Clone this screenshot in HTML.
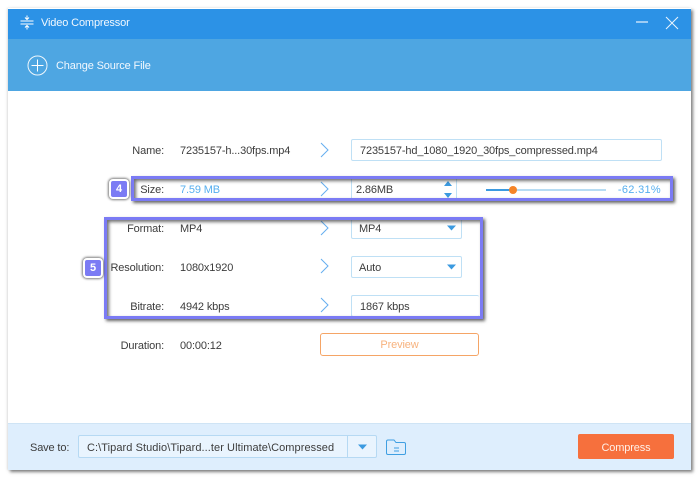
<!DOCTYPE html>
<html><head><meta charset="utf-8"><style>
html,body{margin:0;padding:0;width:700px;height:479px;overflow:hidden;background:#fff}
body{position:relative;font:11px/14px "Liberation Sans",sans-serif;color:#3c3c3c;letter-spacing:-.14px}
.a{position:absolute}
.t{position:absolute;white-space:nowrap;height:14px}
.l{position:absolute;white-space:nowrap;right:536px;height:14px}
.i{position:absolute;box-sizing:border-box;border:1px solid #bfe0f5;border-radius:2px;background:#fff}
.h{position:absolute;box-sizing:border-box;border:3px solid #7b7bf4;box-shadow:2px 2px 3px rgba(50,50,50,.75),inset 2px 2px 3px rgba(50,50,50,.7)}
.b{position:absolute;box-sizing:border-box;width:20px;height:20px;background:#7b7bf4;border:2px solid #fff;border-radius:4px;box-shadow:0 0 2px 1px rgba(70,70,70,.7);color:#fff;font:bold 11px/16px "Liberation Sans",sans-serif;text-align:center;letter-spacing:0}
svg{position:absolute;overflow:visible}
</style></head><body>
<div class="a" style="left:8px;top:8px;width:683px;height:462px;background:#fff;box-shadow:2px 2px 3px rgba(60,60,60,.65),-1px 0 2px rgba(150,150,150,.25)"></div>
<div class="a" style="left:8px;top:9px;width:683px;height:30px;background:#2c92e6"></div>
<div class="a" style="left:8px;top:39px;width:683px;height:52px;background:#4ea6e2"></div>

<svg style="left:0;top:0" width="700" height="100" fill="none" stroke="#fff">
<path d="M20.500 21h13M20.500 24h13" stroke-width="1"/>
<path d="M27 15.500v3.500M27 26v3.500" stroke-width="1"/>
<path d="M25 17.500l2 2 2-2M25 27.500l2-2 2 2" stroke-width="1"/>
<circle cx="37.500" cy="65.500" r="9.500" stroke-width="1" opacity=".9"/>
<path d="M37.500 59.500v12M31.500 65.500h12" stroke-width="1"/>
<path d="M636 22h12" stroke-width="1.200" opacity=".9"/>
<path d="M666 17l12 12M678 17l-12 12" stroke-width="1" opacity=".9"/>
</svg>
<div class="t" style="left:41px;top:16px;color:#f2f8fe">Video Compressor</div>
<div class="t" style="left:56px;top:59px;color:#f2f8fe">Change Source File</div>

<div class="l" style="top:144px">Name:</div>
<div class="t" style="left:180px;top:144px">7235157-h...30fps.mp4</div>
<div class="l" style="top:183px">Size:</div>
<div class="t" style="left:180px;top:183px;color:#55aeef">7.59 MB</div>
<div class="l" style="top:222px">Format:</div>
<div class="t" style="left:180px;top:222px">MP4</div>
<div class="l" style="top:261px">Resolution:</div>
<div class="t" style="left:180px;top:261px">1080x1920</div>
<div class="l" style="top:300px">Bitrate:</div>
<div class="t" style="left:180px;top:300px">4942 kbps</div>
<div class="l" style="top:339px">Duration:</div>
<div class="t" style="left:180px;top:339px">00:00:12</div>

<svg style="left:0;top:0" width="700" height="330" fill="none" stroke="#64aef0" stroke-width="1">
<path d="M321 143l7 7-7 7M321 182l7 7-7 7M321 221l7 7-7 7M321 259l7 7-7 7M321 298l7 7-7 7"/>
</svg>

<div class="i" style="left:351px;top:139px;width:311px;height:22px"></div>
<div class="t" style="left:360px;top:144px">7235157-hd_1080_1920_30fps_compressed.mp4</div>

<div class="i" style="left:351px;top:178px;width:106px;height:22px;border-radius:0"></div>
<div class="t" style="left:356px;top:183px">2.86MB</div>
<div class="a" style="left:486px;top:189px;width:120px;height:2px;background:#b7dcf3"></div>
<div class="a" style="left:486px;top:189px;width:27px;height:2px;background:#3b9ae0"></div>
<div class="a" style="left:509px;top:186px;width:8px;height:8px;border-radius:50%;background:#f58428"></div>
<div class="t" style="right:39px;top:183px;color:#55aeef;letter-spacing:.3px">-62.31%</div>

<div class="i" style="left:351px;top:218px;width:111px;height:21px"></div>
<div class="t" style="left:359px;top:222px">MP4</div>
<div class="i" style="left:351px;top:256px;width:111px;height:22px"></div>
<div class="t" style="left:359px;top:261px">Auto</div>
<div class="i" style="left:351px;top:295px;width:128px;height:22px;border-right:0"></div>
<div class="t" style="left:360px;top:300px">1867 kbps</div>
<svg style="left:0;top:0" width="700" height="280" fill="#3b9ae0">
<path d="M444 186l4-5 4 5zM444 193l4 5 4-5z"/>
<path d="M447 225.500h9l-4.500 5zM447 264.500h9l-4.500 5z"/>
</svg>

<div class="a" style="left:320px;top:333px;width:159px;height:23px;box-sizing:border-box;border:1.500px solid #f5a566;border-radius:3px;background:#fff;color:#f7b27d;text-align:center;line-height:23px">Preview</div>

<div class="h" style="left:131px;top:176px;width:542px;height:25px"></div>
<div class="h" style="left:104px;top:217px;width:379px;height:102px"></div>
<div class="b" style="left:109px;top:179px">4</div>
<div class="b" style="left:83px;top:258px">5</div>

<div class="a" style="left:8px;top:423px;width:683px;height:47px;background:#deeefd;border-top:1px solid #cfe4f5;box-sizing:border-box"></div>
<div class="t" style="left:30px;top:441px">Save to:</div>
<div class="a" style="left:78px;top:435px;width:299px;height:23px;box-sizing:border-box;border:1px solid #b6d9f3;border-radius:2px;background:#e9f4fe"></div>
<div class="a" style="left:347px;top:435px;width:1px;height:23px;background:#b6d9f3"></div>
<div class="t" style="left:87px;top:441px;letter-spacing:.07px">C:\Tipard Studio\Tipard...ter Ultimate\Compressed</div>
<svg style="left:0;top:0" width="700" height="479">
<path d="M358 444.500h9l-4.500 5z" fill="#3b9ae0"/>
<path d="M386.500 441.500q0-1.500 1.500-1.500h6l2 2.500h8q1.500 0 1.500 1.500v9q0 1.500-1.500 1.500h-16q-1.500 0-1.500-1.500zM394 448h5M394 451h5" fill="none" stroke="#3f9fe2" stroke-width="1"/>
</svg>
<div class="a" style="left:578px;top:434px;width:96px;height:25px;border-radius:2px;background:#f6703d;color:#fff0e8;text-align:center;line-height:28px">Compress</div>
</body></html>
